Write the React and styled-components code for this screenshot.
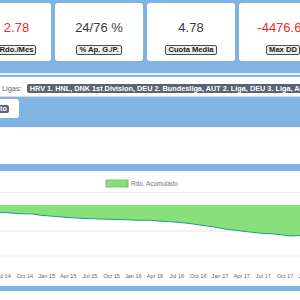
import React from "react";
import styled, { createGlobalStyle } from "styled-components";

const Global = createGlobalStyle`
  html, body { margin: 0; padding: 0; background: #7fb4e3; }
  body { font-family: "Liberation Sans", Arial, sans-serif; }
`;

const Page = styled.div`
  width: 300px;
  height: 300px;
  overflow: hidden;
  background: #7fb4e3;
  padding-top: 3px;
  box-sizing: border-box;
`;

const CardRow = styled.div`
  display: flex;
  gap: 4px;
  margin-left: -37px;
  width: 400px;
`;

const Card = styled.div`
  flex: 0 0 88px;
  height: 58px;
  box-sizing: border-box;
  background: #fff;
  border-radius: 3px;
  display: flex;
  flex-direction: column;
  align-items: center;
  padding: 17px 0 0 ${(p) => p.$shift || 0}px;
`;

const Value = styled.div`
  font-size: 13px;
  line-height: 16px;
  color: ${(p) => (p.$neg ? "#f42a2a" : "#3a3a3a")};
  white-space: nowrap;
`;

const Tag = styled.div`
  margin-top: 9px;
  border: 1px solid #4d4d4d;
  border-radius: 2px;
  background: #efefef;
  color: #222;
  font-size: 7.6px;
  font-weight: bold;
  line-height: 8px;
  padding: 0 2px;
  white-space: nowrap;
`;

const Rule = styled.div`
  height: 2px;
  margin-top: 12px;
  background: #e6f1fb;
`;

const FilterBar = styled.div`
  margin-top: 2px;
  height: 20px;
  box-sizing: border-box;
  padding: 4px 0 0 2px;
  background: #fff;
  border-bottom: 1px solid #dcdcdc;
  display: flex;
  align-items: center;
  gap: 5px;
  white-space: nowrap;
  overflow: hidden;
`;

const FilterLabel = styled.span`
  font-size: 7.4px;
  color: #666;
`;

const Badge = styled.span`
  background: #5b6371;
  color: #fff;
  font-size: 7.3px;
  font-weight: bold;
  line-height: 9px;
  padding: 0 3px;
  border-radius: 2px;
  white-space: nowrap;
`;

const ButtonZone = styled.div`
  height: 30px;
  padding-top: 2px;
  box-sizing: border-box;
`;

const ButtonBox = styled.div`
  width: 19px;
  height: 19px;
  background: #fff;
  border-radius: 0 3px 3px 0;
  display: flex;
  align-items: center;
`;

const DarkChip = styled.span`
  background: #5b6371;
  color: #fff;
  font-size: 7.4px;
  font-weight: bold;
  line-height: 8px;
  padding: 0 2px 0 0;
  border-radius: 0 2px 2px 0;
  margin-top: 1px;
`;

const Panel = styled.div`
  background: #fff;
  height: ${(p) => p.$h}px;
  margin-bottom: ${(p) => p.$mb || 0}px;
  border-top: 1px solid #eef5fc;
  box-sizing: border-box;
  overflow: hidden;
`;

const Footer = styled.div`
  height: 20px;
  background: #fff;
`;

const cards = [
  { v: "2.78", l: "Rdo./Mes", neg: true, shift: 19 },
  { v: "24/76 %", l: "% Ap. G./P." },
  { v: "4.78", l: "Cuota Media" },
  { v: "-4476.67", l: "Max DD", neg: true },
];

const linePts = [
  [0, 41.3], [10, 42], [20, 42.6], [33, 43], [42, 44.4], [50, 45], [62, 46], [75, 47],
  [88, 47.6], [100, 48], [112, 48.4], [125, 48.7], [138, 49.3], [150, 49.2], [162, 50.3],
  [175, 51], [188, 52.3], [200, 54], [212, 55.6], [225, 58], [238, 59.6], [250, 61],
  [262, 62.3], [275, 63], [283, 64], [290, 65], [300, 64.6],
];

const labels = [
  "Jul 14", "Oct 14", "Jan 15", "Apr 15", "Jul 15", "Oct 15", "Jan 16", "Apr 16",
  "Jul 16", "Oct 16", "Jan 17", "Apr 17", "Jul 17", "Oct 17", "Jan 18",
];

function Chart() {
  const top = 34;
  const line = linePts.map(([x, y]) => `${x},${y}`).join(" L");
  const area = `M0,${top} L${line} L300,${top} Z`;
  return (
    <svg width="300" height="114" viewBox="0 1 300 114" style={{ display: "block" }}>
      <rect x="106" y="9" width="22" height="7" fill="#86df78" stroke="#5fc45a" strokeWidth="0.8" />
      <text x="131" y="15" fontSize="6.4" fill="#777" fontFamily="Liberation Sans, Arial, sans-serif">
        Rdo. Acumulado
      </text>
      <line x1="0" x2="300" y1="21.5" y2="21.5" stroke="#ececec" strokeWidth="1" />
      <line x1="0" x2="300" y1="60" y2="60" stroke="#e6e6e6" strokeWidth="1" />
      <line x1="0" x2="300" y1="85" y2="85" stroke="#e6e6e6" strokeWidth="1" />
      <path d={area} fill="#88e07a" />
      <path d={`M${line}`} fill="none" stroke="#1e9d84" strokeWidth="1" />
      {labels.map((t, i) => (
        <text
          key={t}
          x={3.3 + i * 21.67}
          y="107"
          fontSize="5.6"
          textAnchor="middle"
          fill="#666"
          fontFamily="Liberation Sans, Arial, sans-serif"
        >
          {t}
        </text>
      ))}
    </svg>
  );
}

export default function App() {
  return (
    <>
      <Global />
      <Page>
        <CardRow>
          {cards.map((c) => (
            <Card key={c.l} $shift={c.shift}>
              <Value $neg={c.neg}>{c.v}</Value>
              <Tag>{c.l}</Tag>
            </Card>
          ))}
        </CardRow>
        <Rule />
        <FilterBar>
          <FilterLabel>Ligas:</FilterLabel>
          <Badge>
            HRV 1. HNL, DNK 1st Division, DEU 2. Bundesliga, AUT 2. Liga, DEU 3. Liga, AUS A-League, BEL 2nd Division
          </Badge>
        </FilterBar>
        <ButtonZone>
          <ButtonBox>
            <DarkChip>to</DarkChip>
          </ButtonBox>
        </ButtonZone>
        <Panel $h={37} $mb={7} />
        <Panel $h={115} $mb={5}>
          <Chart />
        </Panel>
        <Footer />
      </Page>
    </>
  );
}
